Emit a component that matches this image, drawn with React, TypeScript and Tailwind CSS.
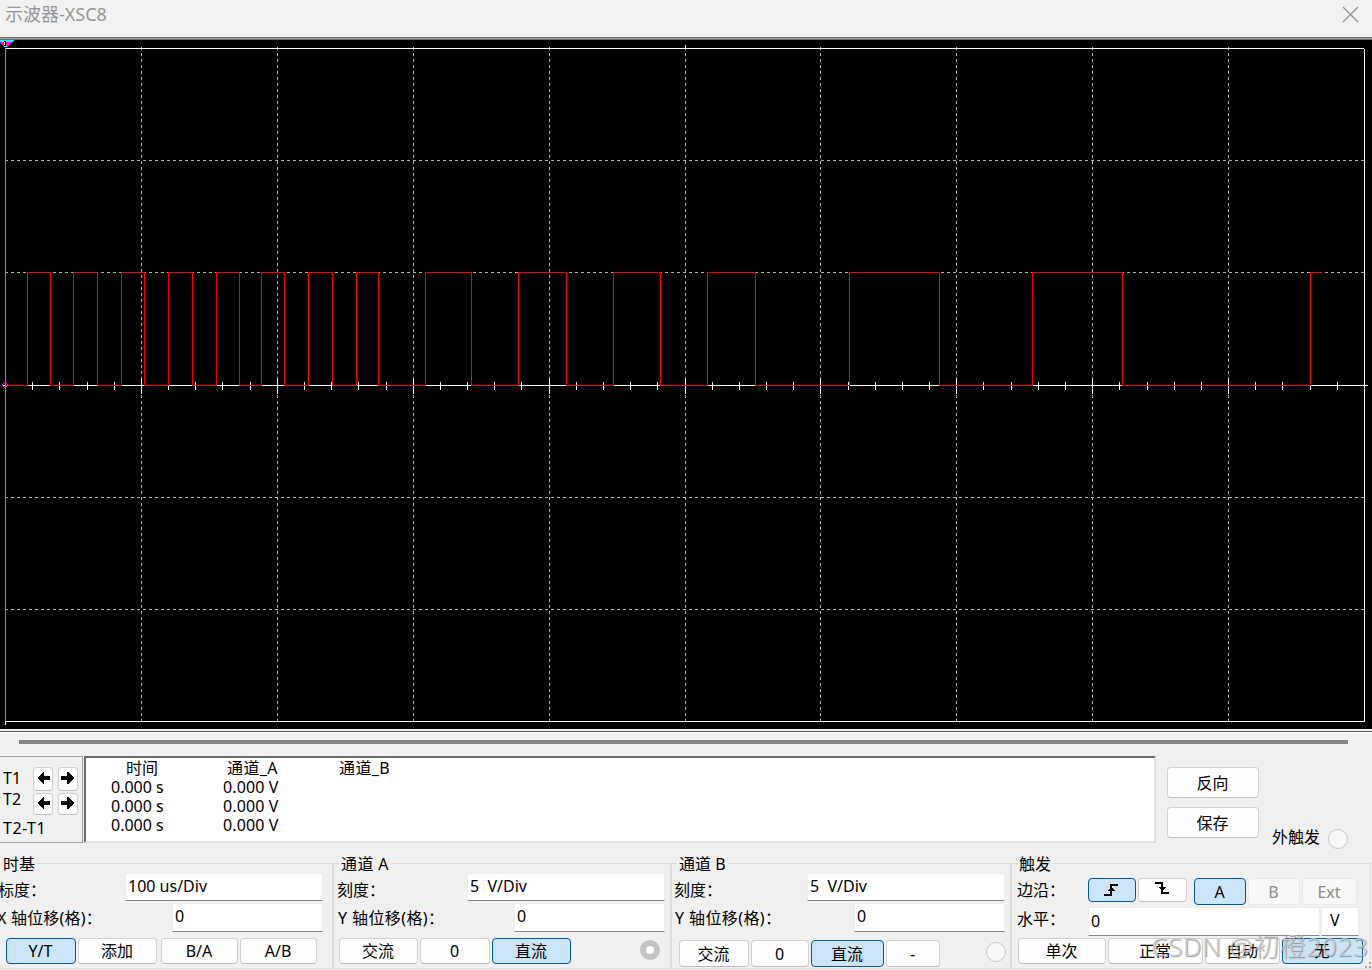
import React from 'react';
import clsx from 'clsx';

const PULSES = [
  [27, 50], [73, 97], [121, 144], [168, 192], [216, 239], [261, 284], [308, 332], [356, 378],
  [425, 471], [518, 566], [613, 660], [707, 755], [849, 939], [1032, 1122],
];
const GRID_X = [141, 277, 413, 549, 685, 820, 956, 1092, 1228];
const GRID_Y = [160, 272, 497, 609];
const TICKS = Array.from({ length: 49 }, (_, i) => i + 1);

const wavePath =
  'M5.5 385.5' +
  PULSES.map(([a, b]) => `H${a + 0.5}V272.5H${b + 0.5}V385.5`).join('') +
  'H1310.5V272.5H1322';

const Scope: React.FC = () => (
  <svg width="1372" height="689" viewBox="0 40 1372 689" shapeRendering="crispEdges" fill="none" className="block bg-black">
    {/* Grid */}
    <g stroke="#b4b4b4" strokeDasharray="3 3">
      {GRID_X.map((x) => <path key={x} d={`M${x + 0.5} 47V721`} />)}
      {GRID_Y.map((y) => <path key={y} d={`M5 ${y + 0.5}H1364`} />)}
    </g>
    <g stroke="#fff">
      <path d="M5 48.5H1364M1364.5 49V722M5 721.5H1365M5.5 721V725M685.5 45V49" />
      <path d="M2 385.5H1368" />
      {TICKS.map((i) => {
        const x = Math.round(5 + i * 27.18) + 0.5;
        return <path key={i} d={i % 5 === 0 ? `M${x} 379V394` : `M${x} 382V390`} />;
      })}
    </g>
    <path d="M5.5 48V721" stroke="#1be01b" />
    <path d={wavePath} stroke="#f00" />

    {/* Cursor handle and channel origin */}
    <path d="M0 40H14L12 42H0Z" fill="#0ff" />
    <path d="M0 42H12L7 47H4L0 43Z" fill="#f0f" />
    <path d="M4 41h2v1h-2zM4 45h2v1h-2z" fill="#000" />
    <path d="M4 42h1v3h-1z" fill="#ff0" />
    <path d="M5 42h1v3h-1z" fill="#000" />
    <path d="M4 46h3v1h-3z" fill="#0ff" />
    <path d="M4 382.5H6M4 387.5H6M2.5 384V386M7.5 384V386M3 383.5H4M6 383.5H7M3 386.5H4M6 386.5H7" stroke="#f0f" />
  </svg>
);

interface BtnProps {
  className?: string;
  active?: boolean;
  disabled?: boolean;
  children?: React.ReactNode;
}

const Btn: React.FC<BtnProps> = ({ className, active, disabled, children }) => (
  <button
    disabled={disabled}
    className={clsx(
      'flex shrink-0 items-center justify-center rounded border pr-px leading-none',
      active && 'border-[#0058a5] bg-[#cce4f7]',
      disabled && 'border-[#e9e9e9] bg-[#f8f8f8] text-[#8c8c8c]',
      !active && !disabled && 'border-[#d0d0d0] border-b-[#bdbdbd] bg-[#fdfdfd]',
      className,
    )}
  >
    {children}
  </button>
);

const Field: React.FC<{ className?: string; children: React.ReactNode }> = ({ className, children }) => (
  <div className={clsx('shrink-0 whitespace-pre border border-[#ececec] border-b-[#868686] bg-white pl-[2px] leading-[25px]', className)}>
    {children}
  </div>
);

const Group: React.FC<{ title: string; className: string; legend: string; children: React.ReactNode }> = ({ title, className, legend, children }) => (
  <section className={clsx('h-[106px] shrink-0 border border-[#dcdcdc]', className)}>
    <h2 className={clsx('-mt-[10px] h-[19px] w-fit bg-[#f0f0f0] px-[2px] leading-5', legend)}>{title}</h2>
    {children}
  </section>
);

const Radio: React.FC<{ className?: string; checked?: boolean }> = ({ className, checked }) => (
  <span className={clsx('size-5 shrink-0 rounded-full', checked ? 'border-[6px] border-[#c3c3c3] bg-white' : 'border border-[#c6c6c6] bg-[#f8f8f8]', className)} />
);

const Arrow: React.FC<{ right?: boolean }> = ({ right }) => (
  <svg width="13" height="12" viewBox="0 0 13 12" shapeRendering="crispEdges" className={clsx('-mt-[2px] shrink-0', right ? '-ml-px -scale-x-100' : 'ml-px')}>
    <path d="M0 6L6 0H7V4H13V8H7V12H6Z" fill="#000" />
  </svg>
);

const ArrowPair: React.FC<{ className: string }> = ({ className }) => (
  <div className={clsx('flex gap-[5px]', className)}>
    <Btn className="h-full w-5"><Arrow /></Btn>
    <Btn className="h-full w-5"><Arrow right /></Btn>
  </div>
);

const App: React.FC = () => (
  <div className="relative h-[970px] w-[1372px] overflow-hidden bg-[#f0f0f0] font-['Noto_Sans','Noto_Sans_CJK_SC',sans-serif] text-[16px] text-black">
    <header className="flex h-[37px] justify-between bg-[#f2f2f2] pl-[5px] pr-[13px] text-[18px] leading-[29px] text-[#969696]">
      <span>示波器-XSC8</span>
      <svg width="17" height="17" viewBox="0 0 17 17" className="mt-[6px]" stroke="#929292" strokeWidth="1.3">
        <path d="M1 1L16 16M16 1L1 16" />
      </svg>
    </header>
    <div className="h-[3px] border-y border-[#696969] bg-[#a0a0a0]" />

    <Scope />

    <div className="h-1 border-t-2 border-b border-t-[#f3edf3] border-b-white bg-[#5c5660]" />
    <div className="h-[23px] pl-[19px] pt-[7px]">
      <div className="h-1 w-[1329px] bg-[#858585]" />
    </div>

    {/* Cursor readout */}
    <div className="flex h-[87px]">
      <div className="flex w-[83px] shrink-0 border-y border-r border-[#a0a0a0]">
        <div className="w-[33px] shrink-0 whitespace-nowrap pl-[3px] pt-[10px]">
          <div className="h-[21px] leading-[22px]">T1</div>
          <div className="h-[29px] leading-[22px]">T2</div>
          <div className="leading-[22px] tracking-[0.5px]">T2-T1</div>
        </div>
        <div className="pt-[10px]">
          <ArrowPair className="h-6" />
          <ArrowPair className="mt-[2px] h-[22px]" />
        </div>
      </div>
      <div className="ml-px flex w-[1072px] shrink-0 border-2 border-t-[#696969] border-r-[#e3e3e3] border-b-[#e3e3e3] border-l-[#696969] bg-white pt-px leading-[19px]">
        <div className="ml-[25px] w-[112px]">
          <div className="ml-[15px]">时间</div>
          <div>0.000 s</div>
          <div>0.000 s</div>
          <div>0.000 s</div>
        </div>
        <div className="w-[112px]">
          <div className="ml-1 tracking-[0.4px]">通道_A</div>
          <div className="tracking-[0.1px]">0.000 V</div>
          <div className="tracking-[0.1px]">0.000 V</div>
          <div className="tracking-[0.1px]">0.000 V</div>
        </div>
        <div className="ml-1 tracking-[0.4px]">通道_B</div>
      </div>
      <div className="ml-[11px] mt-[11px] flex flex-col gap-[9px]">
        <Btn className="h-[31px] w-[92px]">反向</Btn>
        <Btn className="h-[31px] w-[92px]">保存</Btn>
      </div>
      <div className="ml-[13px] mt-[73px] flex h-5">
        <span className="w-14 leading-4">外触发</span>
        <Radio />
      </div>
    </div>

    {/* Control groups */}
    <div className="mt-5 flex whitespace-nowrap">
      <Group title="时基" className="w-[333px] border-l-0" legend="ml-px">
        <div className="flex h-[30px]">
          <span className="-ml-[2px] w-[127px] pt-[5px]">标度：</span>
          <Field className="h-7 w-[198px]">100 us/Div</Field>
        </div>
        <div className="flex h-[35px]">
          <span className="-ml-[3px] w-[175px] pt-[3px] tracking-[0.2px]">X 轴位移(格)：</span>
          <Field className="h-[29px] w-[151px]">0</Field>
        </div>
        <div className="flex h-[26px] pl-[6px]">
          <Btn className="w-[70px]" active>Y/T</Btn>
          <Btn className="ml-[2px] w-[79px]">添加</Btn>
          <Btn className="ml-1 w-[77px]">B/A</Btn>
          <Btn className="ml-[2px] w-[77px]">A/B</Btn>
        </div>
      </Group>

      <Group title="通道 A" className="w-[338px]" legend="ml-[5px] tracking-[0.4px]">
        <div className="flex h-[30px] pl-[3px]">
          <span className="w-[130px] pt-[5px]">刻度：</span>
          <Field className="h-7 w-[198px]">{'5  V/Div'}</Field>
        </div>
        <div className="flex h-[35px] pl-1">
          <span className="w-[176px] pt-[3px] tracking-[0.4px]">Y 轴位移(格)：</span>
          <Field className="h-[29px] w-[151px]">0</Field>
        </div>
        <div className="flex h-[26px] pl-[5px]">
          <Btn className="w-[79px]">交流</Btn>
          <Btn className="ml-[2px] w-[70px]">0</Btn>
          <Btn className="ml-[2px] w-[79px]" active>直流</Btn>
          <Radio className="ml-[69px] mt-[2px]" checked />
        </div>
      </Group>

      <Group title="通道 B" className="w-[340px]" legend="ml-[5px]">
        <div className="flex h-[30px] pl-[2px]">
          <span className="w-[133px] pt-[5px]">刻度：</span>
          <Field className="h-7 w-[198px]">{'5  V/Div'}</Field>
        </div>
        <div className="flex h-[37px] pl-[3px]">
          <span className="w-[179px] pt-[3px] tracking-[0.4px]">Y 轴位移(格)：</span>
          <Field className="h-[29px] w-[151px]">0</Field>
        </div>
        <div className="flex h-[27px] pl-[7px]">
          <Btn className="w-[70px]">交流</Btn>
          <Btn className="ml-[2px] w-[58px]">0</Btn>
          <Btn className="ml-[2px] w-[73px]" active>直流</Btn>
          <Btn className="ml-[2px] w-[54px]">-</Btn>
          <Radio className="ml-[46px] mt-[2px]" />
        </div>
      </Group>

      <Group title="触发" className="w-[360px]" legend="ml-[5px]">
        <div className="flex h-[34px] pl-[5px]">
          <span className="w-[71px] pt-[5px]">边沿：</span>
          <Btn className="mt-[5px] h-6 w-12" active>
            <svg width="14" height="12" viewBox="0 0 14 12" shapeRendering="crispEdges" className="-ml-px">
              <path d="M0 10H6V0H14V2H8V12H0ZM3 7L7 3L11 7Z" fill="#000" />
            </svg>
          </Btn>
          <Btn className="ml-[2px] mt-[5px] h-6 w-[49px]">
            <svg width="14" height="12" viewBox="0 0 14 12" shapeRendering="crispEdges" className="-ml-px -mt-1">
              <path d="M0 0H8V10H14V12H6V2H0ZM3 5H11L7 9Z" fill="#000" />
            </svg>
          </Btn>
          <Btn className="ml-[7px] mt-[5px] h-[27px] w-[52px]" active>A</Btn>
          <Btn className="ml-[2px] mt-[5px] h-[27px] w-[52px]" disabled>B</Btn>
          <Btn className="ml-[2px] mt-[5px] h-[27px] w-[55px]" disabled>Ext</Btn>
        </div>
        <div className="flex h-[31px] pl-[5px]">
          <span className="w-[71px]">水平：</span>
          <Field className="h-[29px] w-[232px] pt-px">0</Field>
          <Field className="ml-px h-[29px] w-[38px]"><span className="ml-[6px]">V</span></Field>
        </div>
        <div className="flex h-[26px] pl-[6px]">
          <Btn className="w-[88px]">单次</Btn>
          <Btn className="ml-[2px] w-[95px]">正常</Btn>
          <Btn className="ml-[2px] w-[75px]">自动</Btn>
          <Btn className="ml-[2px] w-[81px]" active>无</Btn>
        </div>
      </Group>
    </div>

    <div className="absolute left-[1151px] top-[929px] whitespace-nowrap text-[26px] font-light leading-[34px] tracking-[0.7px] text-[#d2d2d2]/75 [text-shadow:1px_1px_1px_rgba(110,110,110,0.7)]">
      CSDN @初橙2023
    </div>
    <svg width="8" height="8" className="absolute bottom-0 right-0" fill="#a8a8a8">
      <path d="M5 0h2v2h-2zM1 4h2v2h-2zM5 4h2v2h-2z" />
    </svg>
  </div>
);

export default App;
